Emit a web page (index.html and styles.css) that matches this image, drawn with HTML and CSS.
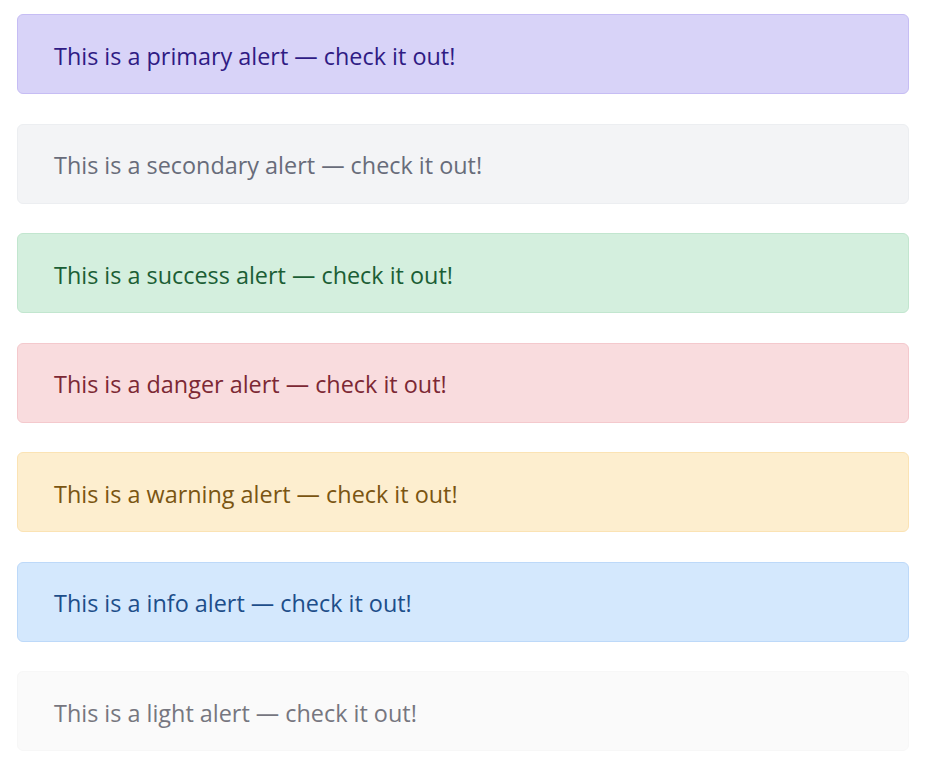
FILE: index.html
```html
<!DOCTYPE html>
<html lang="en">
<head>
<meta charset="utf-8">
<title>Alerts</title>
<link rel="stylesheet" href="styles.css">
</head>
<body>
<div class="alerts">
  <div class="alert alert-primary">This is a primary alert — check it out!</div>
  <div class="alert alert-secondary">This is a secondary alert — check it out!</div>
  <div class="alert alert-success">This is a success alert — check it out!</div>
  <div class="alert alert-danger">This is a danger alert — check it out!</div>
  <div class="alert alert-warning">This is a warning alert — check it out!</div>
  <div class="alert alert-info">This is a info alert — check it out!</div>
  <div class="alert alert-light">This is a light alert — check it out!</div>
</div>
</body>
</html>
```
FILE: styles.css
```css
html, body {
  margin: 0;
  padding: 0;
  background: #ffffff;
}
body {
  font-family: "Open Sans", "Noto Sans", "DejaVu Sans", sans-serif;
}
.alerts {
  padding: 14px 21px 0 17px;
  display: flex;
  flex-direction: column;
  gap: 29.5px;
}
.alert {
  box-sizing: border-box;
  height: 80px;
  display: flex;
  align-items: center;
  padding: 3px 36px 0;
  border: 1.5px solid transparent;
  border-radius: 6px;
  font-size: 23.4px;
}
.alert-primary { background: #d8d3f8; border-color: #c6bdf4; color: #2f1b84; }
.alert-secondary { background: #f3f4f6; border-color: #eceef1; color: #686c7a; }
.alert-success { background: #d4efde; border-color: #c2e6cf; color: #1b5e35; }
.alert-danger { background: #f9dcde; border-color: #f4c9cd; color: #7c2834; }
.alert-warning { background: #fdeecf; border-color: #fbe3b4; color: #7a5512; }
.alert-info { background: #d4e8fd; border-color: #bdd9f9; color: #1d4e8a; }
.alert-light { background: #fafafa; border-color: #f7f7f7; color: #76767f; }
```
